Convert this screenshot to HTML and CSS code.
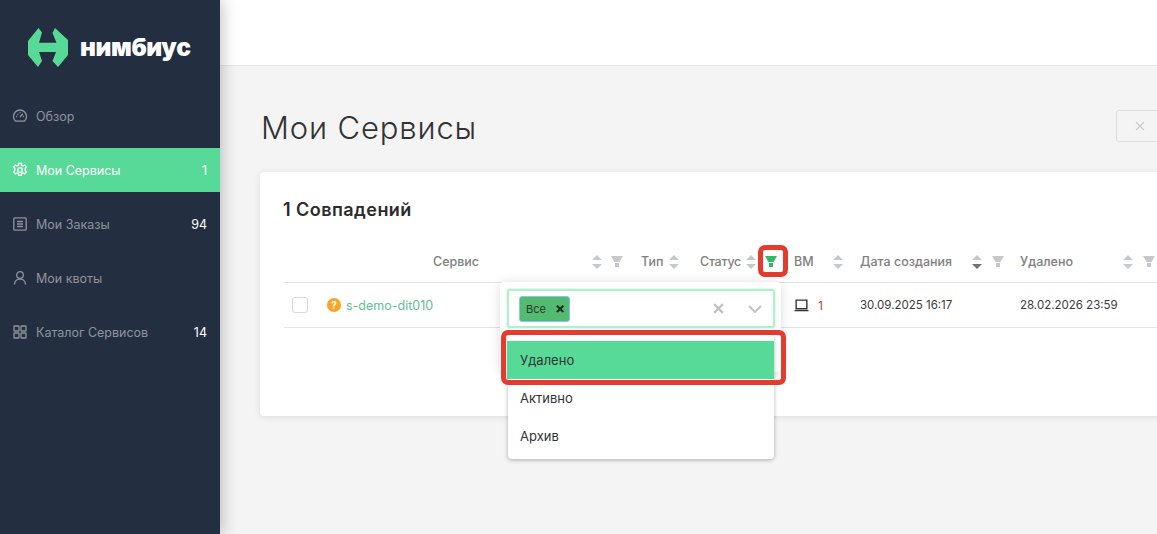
FILE: index.html
```html
<!DOCTYPE html>
<html lang="ru">
<head>
<meta charset="utf-8">
<title>Мои Сервисы</title>
<link rel="stylesheet" href="styles.css">
</head>
<body>
<div class="app">
  <aside class="sidebar">
    <div class="logo">
      <svg class="logo-mark" viewBox="0 0 40 39"><path d="M10.500 0 14 4.500 11 14.700H28.500L24.500 5 27 0 40 12V27L30 39 24.500 33 28 24H11L14 33 10 39 0 27V13Z" fill="#57da97"/></svg>
      <span class="logo-text">нимбиус</span>
    </div>
    <nav class="nav">
      <a class="nav-item"><svg class="nav-icon" viewBox="0 0 16 16"><path d="M3.500 13.200a6.500 6.500 0 1 1 9 0z"/><path d="M8 9 10.800 5.800M4.200 8.500h1M10.800 8.500h1M8 4.300v1M5.500 6l.7.700"/></svg><span class="nav-label">Обзор</span></a>
      <a class="nav-item active"><svg class="nav-icon" viewBox="0 0 16 16"><path d="M6.700 1.500h2.600l.4 1.900 1.300.6 1.700-1 1.600 2.200-1.200 1.500v1.500l1.200 1.500-1.600 2.200-1.700-1-1.300.6-.4 1.900H6.700l-.4-1.900-1.300-.6-1.700 1-1.600-2.200 1.200-1.500V6.700L1.700 5.200l1.600-2.200 1.700 1 1.300-.6z"/><circle cx="8" cy="8" r="2.300"/></svg><span class="nav-label">Мои Сервисы</span><span class="nav-count">1</span></a>
      <a class="nav-item"><svg class="nav-icon" viewBox="0 0 16 16"><rect x="1.800" y="1.800" width="12.400" height="12.400" rx="1"/><path d="M5 5.500h6M5 8h6M5 10.500h6"/></svg><span class="nav-label">Мои Заказы</span><span class="nav-count">94</span></a>
      <a class="nav-item"><svg class="nav-icon" viewBox="0 0 16 16"><circle cx="8" cy="5" r="3.300"/><path d="M2.500 14.500c0-3.500 2.500-5.500 5.500-5.500s5.500 2 5.500 5.500"/></svg><span class="nav-label">Мои квоты</span></a>
      <a class="nav-item"><svg class="nav-icon" viewBox="0 0 16 16"><rect x="2" y="2" width="5" height="5" rx=".6"/><rect x="9" y="2" width="5" height="5" rx=".6"/><rect x="2" y="9" width="5" height="5" rx=".6"/><rect x="9" y="9" width="5" height="5" rx=".6"/></svg><span class="nav-label">Каталог Сервисов</span><span class="nav-count">14</span></a>
    </nav>
  </aside>
  <main class="main">
    <header class="topbar"></header>
    <section class="content">
      <div class="page-head">
        <h1 class="page-title">Мои Сервисы</h1>
        <button class="ghost-btn"><svg viewBox="0 0 10 10"><path d="M1 1 9 9M9 1 1 9"/></svg></button>
      </div>
      <div class="card">
        <h2 class="card-title">1 Совпадений</h2>
        <div class="table">
          <div class="row head">
            <div class="col c-check"></div>
            <div class="col c-name"><span class="th th-service">Сервис</span><svg class="sort" viewBox="0 0 10 14"><path d="M5 0 10 5H0ZM5 14 0 9H10Z"/></svg><svg class="funnel" viewBox="0 0 12 11"><path d="M0 0H12L8.500 6H3.500ZM4 7H8V11H4Z"/></svg></div>
            <div class="col c-type"><span class="th">Тип</span><svg class="sort" viewBox="0 0 10 14"><path d="M5 0 10 5H0ZM5 14 0 9H10Z"/></svg></div>
            <div class="col c-status"><span class="th th-status">Статус</span><svg class="sort" viewBox="0 0 10 14"><path d="M5 0 10 5H0ZM5 14 0 9H10Z"/></svg><svg class="funnel on" viewBox="0 0 12 11"><path d="M0 0H12L8.500 6H3.500ZM4 7H8V11H4Z"/></svg><span class="mark mark-filter"></span></div>
            <div class="col c-vm"><span class="th">ВМ</span><svg class="sort" viewBox="0 0 10 14"><path d="M5 0 10 5H0ZM5 14 0 9H10Z"/></svg></div>
            <div class="col c-date"><span class="th">Дата создания</span><svg class="sort" viewBox="0 0 10 14"><path d="M5 0 10 5H0Z"/><path class="down" d="M5 14 0 9H10Z"/></svg><svg class="funnel" viewBox="0 0 12 11"><path d="M0 0H12L8.500 6H3.500ZM4 7H8V11H4Z"/></svg></div>
            <div class="col c-del"><span class="th">Удалено</span><svg class="sort" viewBox="0 0 10 14"><path d="M5 0 10 5H0ZM5 14 0 9H10Z"/></svg><svg class="funnel" viewBox="0 0 12 11"><path d="M0 0H12L8.500 6H3.500ZM4 7H8V11H4Z"/></svg></div>
          </div>
          <div class="row body">
            <div class="col c-check"><span class="checkbox"></span></div>
            <div class="col c-name"><span class="help">?</span><a class="svc-link">s-demo-dit010</a></div>
            <div class="col c-type"></div>
            <div class="col c-status"></div>
            <div class="col c-vm"><svg class="laptop" viewBox="0 0 14 12"><path d="M2 1h10v8H2zM.5 10.800h13"/></svg><span class="vm-count">1</span></div>
            <div class="col c-date">30.09.2025 16:17</div>
            <div class="col c-del">28.02.2026 23:59</div>
          </div>
          <div class="filter-pop">
            <div class="select">
              <span class="tag">Все<b class="tag-x">×</b></span>
              <svg class="sel-x" viewBox="0 0 10 10"><path d="M1 1 9 9M9 1 1 9"/></svg>
              <svg class="sel-chev" viewBox="0 0 14 8"><path d="M1 1 7 7 13 1"/></svg>
            </div>
            <ul class="menu">
              <li class="opt sel">Удалено</li>
              <li class="opt">Активно</li>
              <li class="opt">Архив</li>
            </ul>
            <span class="mark mark-opt"></span>
          </div>
        </div>
      </div>
    </section>
  </main>
</div>
</body>
</html>
```
FILE: styles.css
```css
* { box-sizing: border-box; }
html, body { margin: 0; height: 100%; overflow: hidden; }
body { font-family: Inter, "Noto Sans", sans-serif; color: #333; background: #f4f4f4; }
.app { display: flex; height: 534px; width: 1157px; overflow: hidden; }
.sidebar { width: 220px; flex: none; background: #232f41; box-shadow: 3px 0 14px rgba(0,0,0,.22); position: relative; z-index: 2; }
.logo { display: flex; align-items: center; height: 94px; padding: 0 0 0 28px; }
.logo-mark { width: 40px; height: 39px; }
.logo-text { margin-left: 12px; font-size: 24.500px; font-weight: 900; color: #fff; letter-spacing: -.4px; line-height: 30px; }
.nav { display: flex; flex-direction: column; }
.nav-item { display: flex; align-items: center; height: 44px; margin-bottom: 10px; padding: 0 13px 0 12px; font-size: 12.500px; color: #8f949b; }
.nav-item.active { color: #fff; background: #57da97; }
.nav-icon { width: 16px; height: 16px; flex: none; margin-right: 8px; fill: none; stroke: currentColor; stroke-width: 1.300; }
.nav-label { flex: 1; }
.nav-count { color: #fff; }
.main { flex: 1; min-width: 0; display: flex; flex-direction: column; }
.topbar { height: 66px; flex: none; background: #fff; border-bottom: 1px solid #e6e6e6; }
.content { flex: 1; padding: 0 0 0 40px; background: #f4f4f4; }
.page-head { display: flex; align-items: center; height: 106px; padding: 18px 0 0 1px; width: 1000px; }
.page-title { margin: 0; width: 855px; flex: none; font-size: 31px; font-weight: 300; line-height: 36px; color: #333; letter-spacing: .85px; }
.ghost-btn { width: 60px; height: 32px; margin-bottom: 4px; border: 1px solid #ddd; border-radius: 3px; background: none; padding: 0 0 0 18px; display: flex; align-items: center; }
.ghost-btn svg { width: 10px; height: 10px; fill: none; stroke: #c4ccd6; stroke-width: 1.300; }
.card { width: 1000px; height: 244px; background: #fff; border-radius: 4px; box-shadow: 0 1px 6px rgba(0,0,0,.1); padding: 28px 0 0 24px; }
.card-title { margin: 0 0 0 -1px; font-size: 18px; font-weight: 600; line-height: 20px; color: #2b2b2b; letter-spacing: .45px; }
.table { position: relative; margin-top: 25px; font-size: 12px; }
.row { display: flex; align-items: center; border-bottom: 1px solid #e4e4e4; }
.row.head { height: 38px; padding-bottom: 4px; }
.row.body { height: 45px; }
.col { display: flex; align-items: center; flex: none; position: relative; height: 100%; }
.c-check { width: 43px; }
.c-name { width: 314px; }
.c-type { width: 59px; }
.c-status { width: 94px; }
.c-vm { width: 66px; }
.c-date { width: 160px; }
.c-del { width: 200px; }
.th { color: #808080; font-weight: 500; font-size: 12.500px; }
.th-service { margin-left: 106px; }
.th-status { letter-spacing: -.25px; }
.sort { width: 10px; height: 14px; fill: #c6c9cc; margin-left: 6px; flex: none; }
.sort .down { fill: #6f7276; }
.funnel { width: 12px; height: 11px; fill: #c6c9cc; margin-left: 10px; flex: none; }
.c-status .sort { margin-left: 5px; }
.funnel.on { fill: #32b866; margin-left: 9px; }
.c-name .sort { margin-left: 113px; }
.c-name .funnel { margin-left: 9px; }
.c-vm .sort { margin-left: 19px; }
.c-date .sort { margin-left: 20px; }
.c-del .sort { margin-left: 50px; }
.checkbox { width: 16px; height: 16px; margin-left: 8px; border: 1px solid #d8d8d8; border-radius: 3px; }
.help { width: 14px; height: 14px; border-radius: 50%; background: #f5a623; color: #fff; font-size: 10px; font-weight: 700; text-align: center; line-height: 14px; }
.svc-link { margin-left: 5px; color: #62c08f; font-size: 12.500px; }
.row.body .c-date, .row.body .c-del { font-size: 11.500px; color: #3a3a3a; }
.laptop { width: 15px; height: 13px; fill: none; stroke: #333; stroke-width: 1.300; }
.vm-count { margin-left: 9px; color: #a0541e; }
.filter-pop { position: absolute; left: 216px; top: 37px; width: 281px; height: 90px; background: #fff; box-shadow: 0 1px 12px rgba(0,0,0,.14); border-radius: 4px; padding: 7px; z-index: 3; }
.select { display: flex; align-items: center; width: 268px; height: 39px; border: 2px solid #b2efcf; border-radius: 3px; padding: 0 0 0 10px; background: #fff; box-shadow: 0 0 0 1px rgba(178,239,207,.35); }
.tag { display: flex; align-items: center; width: 51px; height: 26px; padding-left: 6px; background: #52bb70; border: 1px solid #8cc4e8; border-radius: 3px; font-size: 11px; color: #2c3a30; }
.tag-x { margin-left: 9px; font-size: 15px; line-height: 1; color: #1f2b22; }
.sel-x { width: 11px; height: 11px; margin-left: 143px; fill: none; stroke: #c2c2c2; stroke-width: 2; flex: none; }
.sel-chev { width: 14px; height: 8px; margin-left: 24px; fill: none; stroke: #c2c2c2; stroke-width: 2; flex: none; }
.menu { list-style: none; margin: 7px 0 0 1px; padding: 6px 0 0; width: 266px; height: 124px; background: #fff; border-radius: 4px; box-shadow: 0 1px 4px rgba(0,0,0,.3); }
.opt { height: 38px; padding-left: 12px; font-size: 13px; line-height: 38px; color: #333; }
.opt.sel { background: #57da97; width: 267px; margin-left: -1px; padding-left: 13px; }
.mark { position: absolute; border: 5px solid #e53b2f; pointer-events: none; }
.mark-filter { left: 58px; top: 0; width: 30px; height: 32px; border-radius: 7px; }
.mark-opt { left: 1px; top: 48px; width: 285px; height: 55px; border-radius: 7px; }
```
